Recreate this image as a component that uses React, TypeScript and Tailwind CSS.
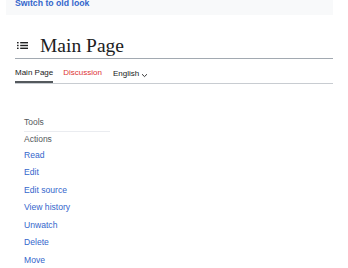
import React from 'react'

const actions = ['Read', 'Edit', 'Edit source', 'View history', 'Unwatch', 'Delete', 'Move']

function ListIcon() {
  return (
    <svg width="11" height="7" viewBox="0 0 11 7" className="text-[#202122]">
      <rect x="0" y="0" width="1.6" height="1.4" fill="currentColor" />
      <rect x="0" y="2.8" width="1.6" height="1.4" fill="currentColor" />
      <rect x="0" y="5.6" width="1.6" height="1.4" fill="currentColor" />
      <rect x="3.2" y="0" width="7.8" height="1.4" fill="currentColor" />
      <rect x="3.2" y="2.8" width="7.8" height="1.4" fill="currentColor" />
      <rect x="3.2" y="5.6" width="7.8" height="1.4" fill="currentColor" />
    </svg>
  )
}

function Chevron() {
  return (
    <svg width="7" height="5" viewBox="0 0 7 5" className="ml-[2px] mt-[2px]">
      <path d="M1 1.2 L3.5 3.6 L6 1.2" fill="none" stroke="#202122" strokeWidth="0.9" />
    </svg>
  )
}

export default function App() {
  return (
    <div className="w-[348px] h-[268px] overflow-hidden bg-white font-['Liberation_Sans',Arial,sans-serif]">
      {/* banner */}
      <div className="ml-[6px] mr-[15px] h-[15px] bg-[#f8f9fa] overflow-hidden">
        <div className="pl-[9px] -mt-[1px] text-[8.7px] leading-[9px] font-bold text-[#3366cc]">
          Switch to old look
        </div>
      </div>

      <div className="px-[15px]">
        {/* title */}
        <div className="mt-[19px] flex items-center border-b border-[#a2a9b1] h-[25px]">
          <div className="pl-[2px] w-[25px] -mt-[1px]">
            <ListIcon />
          </div>
          <h1 className="font-['Liberation_Serif',Times,serif] text-[19.5px] leading-[24px] text-[#202122]">
            Main Page
          </h1>
        </div>

        {/* tabs */}
        <div className="flex gap-[10px] border-b border-[#c8ccd1] text-[8px] leading-[10px]">
          <div className="pt-[9px] pb-[3px] border-b-2 border-[#54595d] text-[#202122]">Main Page</div>
          <div className="pt-[9px] pb-[3px] text-[#dd3333]">Discussion</div>
          <div className="pt-[9px] pb-[3px] pl-[1px] flex items-center text-[#202122]">
            English
            <Chevron />
          </div>
        </div>

        {/* tools menu */}
        <div className="ml-[9px] w-[86px] mt-[32px]">
          <div className="text-[8.5px] leading-[12px] pb-[3px] border-b border-[#eaecf0] text-[#54595d]">Tools</div>
          <div className="mt-[1px] text-[8.5px] leading-[12px] text-[#54595d]">Actions</div>
          <ul className="mt-[1.7px]">
            {actions.map(a => (
              <li key={a} className="text-[8.6px] leading-[17.5px] text-[#3366cc]">{a}</li>
            ))}
          </ul>
        </div>
      </div>
    </div>
  )
}
